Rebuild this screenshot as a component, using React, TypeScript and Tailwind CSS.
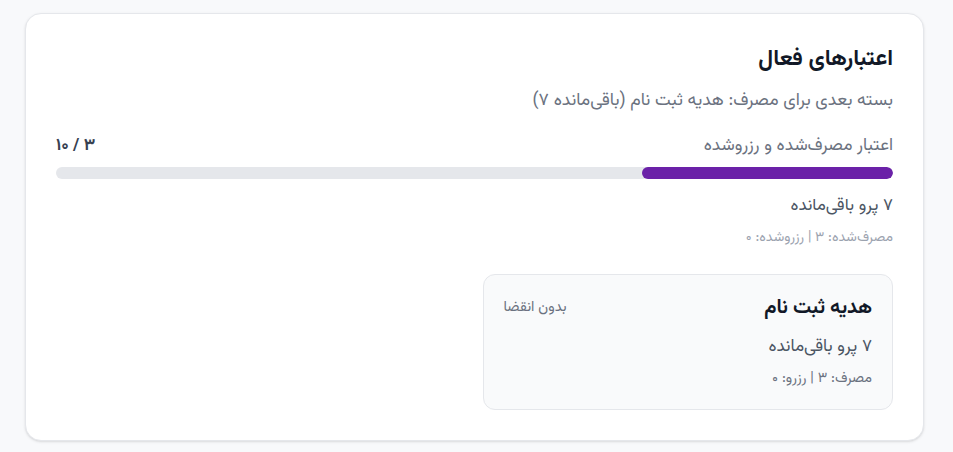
const font = {
  fontFamily: '"Vazirmatn", "Noto Sans Arabic", "DejaVu Sans", sans-serif',
}

export default function App() {
  return (
    <div dir="rtl" className="min-h-screen bg-[#f8f9fb] pt-[13px] pl-[25px] pr-[29px]" style={font}>
      <section className="w-[899px] rounded-2xl border border-[#e5e7eb] bg-white px-[30px] pt-[31px] pb-[30px] shadow-sm">
        <h2 className="text-[22.5px] font-bold leading-[30px] text-[#111827]">اعتبارهای فعال</h2>
        <p className="mt-[13px] text-[17.6px] leading-[26px] text-[#6b7280]">
          بسته بعدی برای مصرف: هدیه ثبت نام (باقی‌مانده ۷)
        </p>

        <div className="mt-[19px] flex items-center justify-between leading-[26px]">
          <span className="text-[17.4px] text-[#6b7280]">اعتبار مصرف‌شده و رزروشده</span>
          <span className="text-[17px] font-bold text-[#374151]">۳ / ۱۰</span>
        </div>
        <div className="mt-[8px] h-3 w-full overflow-hidden rounded-full bg-[#e5e7eb]">
          <div className="h-full rounded-full bg-[#6b21a8]" style={{ width: "30%" }} />
        </div>

        <p className="mt-[14px] text-[17px] leading-[26px] text-[#4b5563]">۷ پرو باقی‌مانده</p>
        <p className="mt-[9px] text-[14px] leading-5 text-[#9ca3af]">مصرف‌شده: ۳ | رزروشده: ۰</p>

        <div className="mt-[26px] grid grid-cols-2 gap-4">
          <div className="rounded-xl border border-[#e5e7eb] bg-[#f9fafb] px-5 pt-[19px] pb-[20px]">
            <div className="flex items-center justify-between">
              <h3 className="text-[20px] font-bold leading-7 text-[#111827]">هدیه ثبت نام</h3>
              <span className="text-[14.5px] leading-6 text-[#6b7280]">بدون انقضا</span>
            </div>
            <p className="mt-[12px] text-[17.2px] leading-[26px] text-[#4b5563]">۷ پرو باقی‌مانده</p>
            <p className="mt-[9px] text-[14.4px] leading-5 text-[#6b7280]">مصرف: ۳ | رزرو: ۰</p>
          </div>
        </div>
      </section>
    </div>
  )
}
